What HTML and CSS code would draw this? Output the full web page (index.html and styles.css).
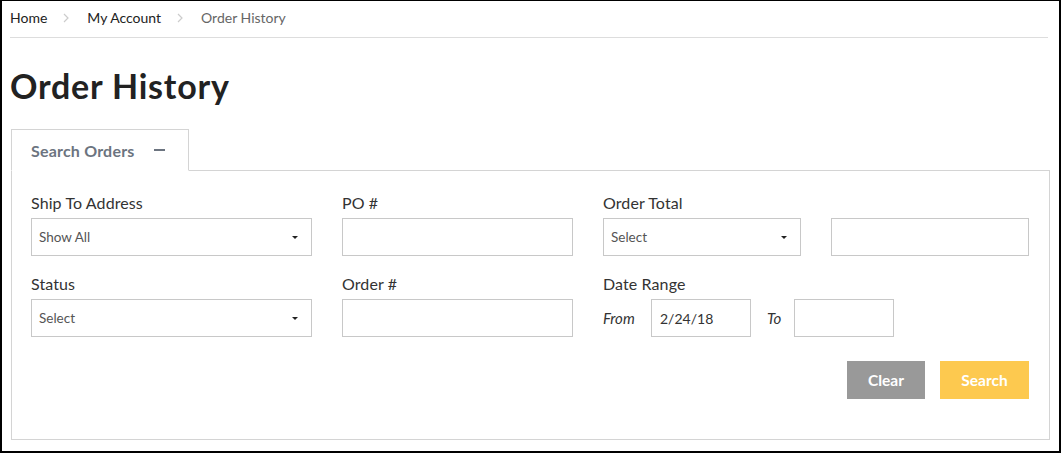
FILE: index.html
```html
<!DOCTYPE html>
<html lang="en">
<head>
<meta charset="utf-8">
<title>Order History</title>
<link rel="stylesheet" href="styles.css">
</head>
<body>
<div class="frame">
  <nav class="crumbs">
    <a class="crumb" href="#">Home</a>
    <svg class="sep" width="6" height="10" viewBox="0 0 6 10"><path d="M1 1l4 4-4 4" fill="none" stroke="#ccc" stroke-width="1.2"/></svg>
    <a class="crumb" href="#">My Account</a>
    <svg class="sep" width="6" height="10" viewBox="0 0 6 10"><path d="M1 1l4 4-4 4" fill="none" stroke="#ccc" stroke-width="1.2"/></svg>
    <span class="crumb current">Order History</span>
  </nav>

  <h1 class="page-title">Order History</h1>

  <div class="tabs">
    <div class="tab">Search Orders <span class="tab-toggle"></span></div>
  </div>

  <form class="search-panel">
    <div class="field-grid">
      <div class="field">
        <label class="field-label">Ship To Address</label>
        <div class="select"><span>Show All</span><i class="caret"></i></div>
      </div>
      <div class="field">
        <label class="field-label">PO #</label>
        <div class="input"></div>
      </div>
      <div class="field">
        <label class="field-label">Order Total</label>
        <div class="select"><span>Select</span><i class="caret"></i></div>
      </div>
      <div class="field field-bare">
        <div class="input"></div>
      </div>

      <div class="field">
        <label class="field-label">Status</label>
        <div class="select"><span>Select</span><i class="caret"></i></div>
      </div>
      <div class="field">
        <label class="field-label">Order #</label>
        <div class="input"></div>
      </div>
      <div class="field field-wide">
        <label class="field-label">Date Range</label>
        <div class="date-range">
          <span class="range-word">From</span>
          <div class="input date"><span>2/24/18</span></div>
          <span class="range-word to">To</span>
          <div class="input date"></div>
        </div>
      </div>
    </div>

    <div class="actions">
      <button type="button" class="btn btn-clear">Clear</button>
      <button type="button" class="btn btn-search">Search</button>
    </div>
  </form>
</div>
</body>
</html>
```

FILE: styles.css
```css
* { box-sizing: border-box; }

html, body {
  margin: 0;
  padding: 0;
  background: #fff;
}

body {
  font-family: "Lato", "Open Sans", "Liberation Sans", sans-serif;
  color: #333;
}

.frame {
  width: 1061px;
  height: 453px;
  border: 2px solid #000;
  border-top-width: 1px;
  padding: 0 9px 0 8px;
  overflow: hidden;
}

/* breadcrumb */
.crumbs {
  display: flex;
  align-items: center;
  height: 37px;
  padding-bottom: 3px;
  border-bottom: 1px solid #ddd;
  font-size: 14px;
  margin-right: 2px;
}
.crumb {
  color: #222;
  text-decoration: none;
}
.crumb.current { color: #666; }
.sep {
  margin: 1px 18px 0 16px;
}

.page-title {
  font-size: 34px;
  font-weight: 700;
  color: #222;
  margin: 28px 0 0 0;
  line-height: 40px;
  letter-spacing: 0.8px;
}

/* tab */
.tabs {
  display: flex;
  margin-top: 23px;
  padding-left: 1px;
}
.tab {
  width: 178px;
  height: 42px;
  border: 1px solid #d4d4d4;
  border-bottom: 1px solid #fff;
  margin-bottom: -1px;
  background: #fff;
  position: relative;
  z-index: 1;
  display: flex;
  align-items: center;
  padding-left: 19px;
  font-size: 16px;
  font-weight: 700;
  color: #6c7480;
  letter-spacing: 0.2px;
}
.tab-toggle {
  display: inline-block;
  width: 11px;
  height: 2px;
  background: #6c7480;
  margin-left: 19px;
}

/* panel */
.search-panel {
  margin-left: 1px;
  border: 1px solid #d4d4d4;
  padding: 23px 20px 40px 19px;
}

.field-grid {
  display: grid;
  grid-template-columns: 281px 231px 198px 198px;
  column-gap: 30px;
  row-gap: 19px;
}

.field {
  display: flex;
  flex-direction: column;
}
.field-bare { justify-content: flex-end; }
.field-wide { grid-column: span 2; }

.field-label {
  font-size: 16px;
  line-height: 18px;
  color: #333;
  margin-bottom: 6px;
  letter-spacing: 0.1px;
}

.select, .input {
  height: 38px;
  border: 1px solid #c8c8c8;
  background: #fff;
  display: flex;
  align-items: center;
  font-size: 13.5px;
  color: #555;
}
.select {
  justify-content: space-between;
  padding: 0 13px 0 7px;
}
.caret {
  width: 0;
  height: 0;
  border-left: 3px solid transparent;
  border-right: 3px solid transparent;
  border-top: 3px solid #222;
  margin-top: 1px;
}

.date-range {
  display: flex;
  align-items: center;
}
.range-word {
  font-size: 15px;
  font-style: italic;
  color: #333;
  width: 48px;
}
.range-word.to {
  width: 27px;
  margin-left: 16px;
}
.input.date {
  width: 100px;
  padding-left: 8px;
  font-size: 14px;
  color: #333;
}

.actions {
  display: flex;
  justify-content: flex-end;
  gap: 15px;
  margin-top: 24px;
}
.btn {
  height: 38px;
  border: 0;
  font-family: inherit;
  font-size: 15.5px;
  font-weight: 700;
  color: #fff;
  cursor: pointer;
}
.btn-clear {
  width: 78px;
  background: #999;
}
.btn-search {
  width: 89px;
  background: #fdc94f;
}
```
